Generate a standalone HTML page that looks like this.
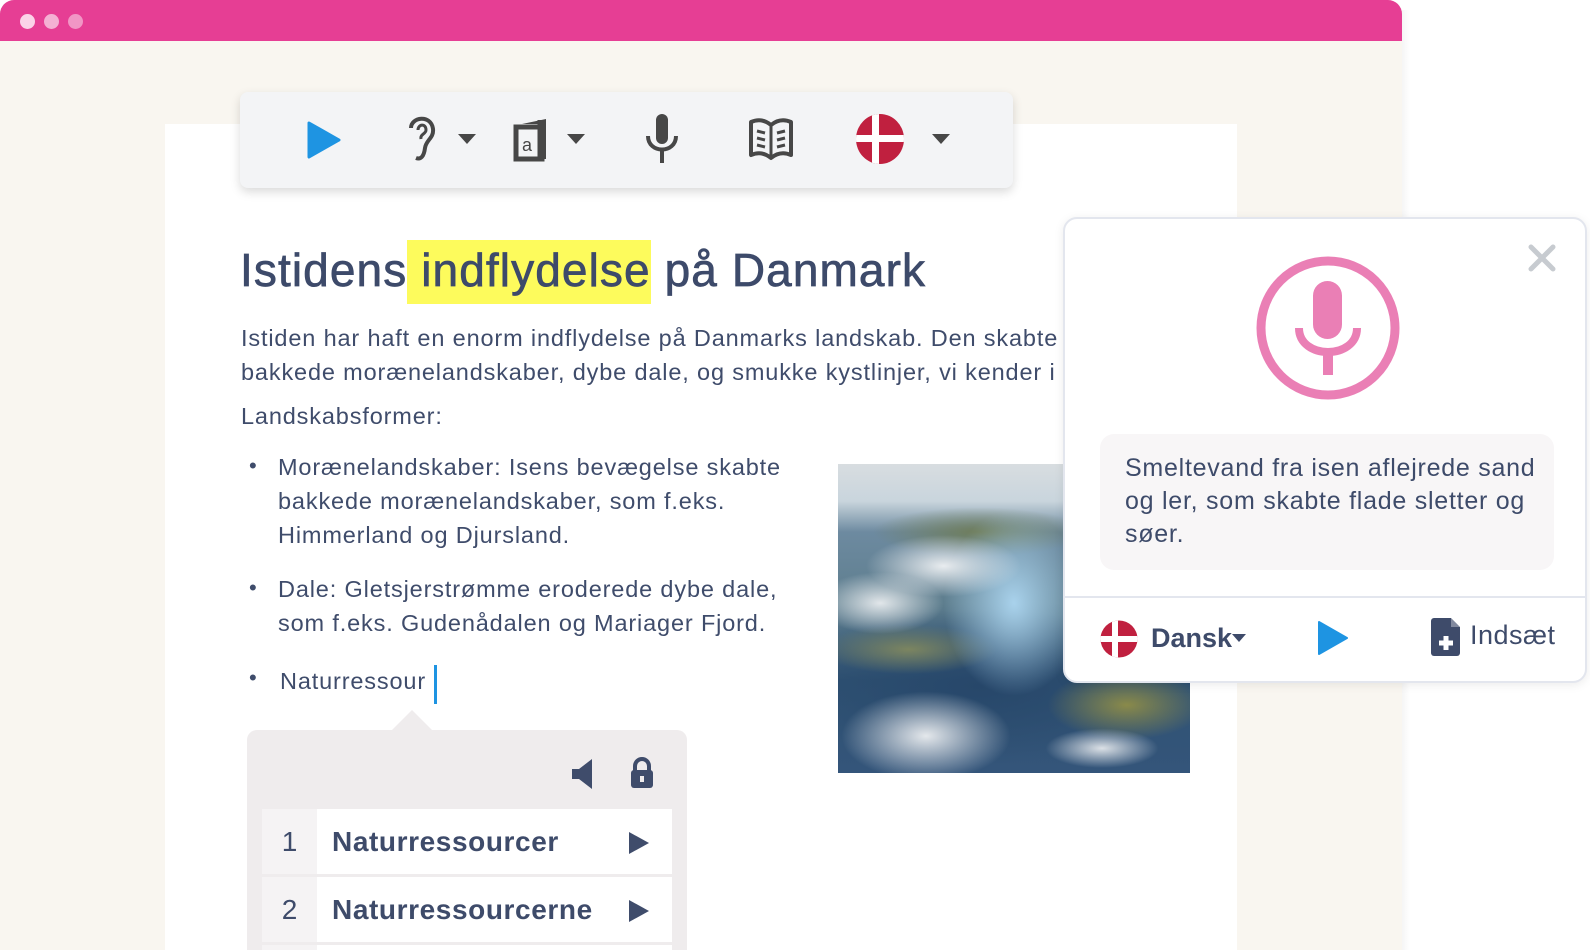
<!DOCTYPE html>
<html><head><meta charset="utf-8"><style>
*{margin:0;padding:0;box-sizing:border-box}
html,body{width:1590px;height:950px;overflow:hidden}
body{background:#fff;font-family:"Liberation Sans",sans-serif;color:#3e4b6a;position:relative}
.win{position:absolute;left:0;top:0;width:1402px;height:950px;background:#f9f6f0;border-radius:14px 14px 0 0;overflow:hidden}
.wsh{position:absolute;left:1402px;top:10px;width:8px;height:940px;background:linear-gradient(90deg,rgba(0,0,0,.04),transparent)}
.bar{height:41px;background:#e63e94}
.dot{position:absolute;top:14px;width:15px;height:15px;border-radius:50%}
.doc{position:absolute;left:165px;top:124px;width:1072px;height:826px;background:#fff}
.tb{position:absolute;left:240px;top:92px;width:773px;height:96px;background:#f3f4f6;border-radius:8px;box-shadow:0 4px 10px rgba(0,0,0,.15)}
.tb svg{position:absolute}
h1{position:absolute;left:240px;top:243px;font-size:46px;font-weight:normal;color:#3d4a6a;white-space:nowrap;letter-spacing:1.1px;-webkit-text-stroke:.7px #3d4a6a}
.hl{background:#fdfb5c;padding:4px 0 8px}
.p{position:absolute;left:241px;font-size:23.5px;line-height:34px;white-space:nowrap;color:#3f4c6b;letter-spacing:.85px}
.b{position:absolute;left:249px;font-size:22px;color:#3f4c6b}
.img{position:absolute;left:838px;top:464px;width:352px;height:309px;overflow:hidden;background:
radial-gradient(ellipse 22% 10% at 30% 33%,rgba(240,242,244,.95),transparent),
radial-gradient(ellipse 18% 10% at 12% 45%,rgba(240,242,244,.9),transparent),
radial-gradient(ellipse 30% 18% at 25% 88%,rgba(238,240,242,.95),transparent 80%),
radial-gradient(ellipse 20% 8% at 75% 92%,rgba(238,240,242,.9),transparent 80%),
radial-gradient(ellipse 28% 14% at 82% 78%,#8a8a4a,transparent 80%),
radial-gradient(ellipse 20% 30% at 50% 45%,#a9d2ec,transparent),
radial-gradient(ellipse 30% 8% at 40% 22%,#6f7d5a,transparent),
radial-gradient(ellipse 25% 8% at 20% 60%,#7c8560,transparent),
radial-gradient(ellipse 60% 25% at 40% 72%,#27476a,transparent),
linear-gradient(#d8dde0 0,#c9d5dd 12%,#6d8aa0 22%,#5e7e8e 45%,#2f5273 70%,#34557a 100%)}
.pop{position:absolute;left:1063px;top:217px;width:524px;height:466px;background:#fff;border:2px solid #e3e6ee;border-radius:14px;box-shadow:0 2px 10px rgba(0,0,0,.08)}
.sg{position:absolute;left:247px;top:730px;width:440px;height:220px;background:#efeced;border-radius:10px 10px 0 0}
.rows{position:absolute;left:0;top:0;width:440px;height:220px;overflow:hidden}
.row{position:absolute;left:15px;width:410px;height:65px;background:#fff}
.row .n{position:absolute;left:0;top:0;width:55px;height:65px;background:#f5f3f4;font-size:28px;text-align:center;line-height:65px}
.row .w{position:absolute;left:70px;top:0;line-height:65px;font-size:28px;font-weight:bold;letter-spacing:.6px}
</style></head><body>
<div class="win"><div class="bar"></div>
<div class="dot" style="left:20px;background:#fbd3e8"></div>
<div class="dot" style="left:44px;background:#f4b0d3"></div>
<div class="dot" style="left:68px;background:#f196c5"></div>
<div class="doc"></div></div>
<div class="wsh"></div>

<div class="tb">
<svg style="left:66px;top:28px" width="36" height="40" viewBox="0 0 36 40"><path d="M3 3 L33 20 L3 37Z" fill="#1e94e2" stroke="#1e94e2" stroke-width="3" stroke-linejoin="round"/></svg>
<svg style="left:164px;top:22px" width="40" height="50" viewBox="0 0 40 50"><path d="M7 14 C7 3 27 0 29 15 C30 24 22 26 21 34 C20 42 17 46 12 44" fill="none" stroke="#474747" stroke-width="4"/><path d="M14 16 C14 10 22 9 22 16 C22 20 16 20 17 25" fill="none" stroke="#474747" stroke-width="3"/></svg>
<svg style="left:218px;top:42px" width="18" height="10"><path d="M0 0H18L9 10Z" fill="#474747"/></svg>
<svg style="left:270px;top:22px" width="42" height="50" viewBox="0 0 42 50"><path d="M12 10 L36 5 V45 H30 V10" fill="#474747"/><path d="M30 6 V45" stroke="#474747" stroke-width="5"/><rect x="6" y="13" width="26" height="32" fill="none" stroke="#474747" stroke-width="5"/><text x="12" y="37" font-size="18" font-family="Liberation Sans" fill="#474747">a</text></svg>
<svg style="left:327px;top:42px" width="18" height="10"><path d="M0 0H18L9 10Z" fill="#474747"/></svg>
<svg style="left:404px;top:20px" width="36" height="54" viewBox="0 0 36 54"><rect x="12" y="2" width="12" height="30" rx="6" fill="#474747"/><path d="M4 24 C4 42 32 42 32 24" fill="none" stroke="#474747" stroke-width="4"/><rect x="16" y="37" width="4" height="14" fill="#474747"/></svg>
<svg style="left:508px;top:25px" width="46" height="44" viewBox="0 0 46 44"><path d="M3 5 C10 2 17 3 23 8 C29 3 36 2 43 5 V38 C36 35 29 36 23 41 C17 36 10 35 3 38Z" fill="none" stroke="#474747" stroke-width="4" stroke-linejoin="round"/><path d="M23 8V41" stroke="#474747" stroke-width="3"/><path d="M9 14L17 16M9 21L17 23M9 28L17 30M29 16L37 14M29 23L37 21M29 30L37 28" stroke="#474747" stroke-width="3"/></svg>
<svg style="left:616px;top:22px" width="48" height="50" viewBox="0 0 48 50"><clipPath id="c1"><ellipse cx="24" cy="25" rx="24" ry="25"/></clipPath><g clip-path="url(#c1)"><rect width="48" height="50" fill="#c0203f"/><rect x="16" width="7" height="50" fill="#fff"/><rect y="21" width="48" height="7" fill="#fff"/></g></svg>
<svg style="left:692px;top:42px" width="18" height="10"><path d="M0 0H18L9 10Z" fill="#474747"/></svg>
</div>

<h1>Istidens<span class="hl"> indflydelse</span> på Danmark</h1>
<div class="p" style="top:321px">Istiden har haft en enorm indflydelse på Danmarks landskab. Den skabte<br>bakkede morænelandskaber, dybe dale, og smukke kystlinjer, vi kender i</div>
<div class="p" style="top:399px">Landskabsformer:</div>
<div class="b" style="top:453px">•</div>
<div class="p" style="left:278px;top:450px">Morænelandskaber: Isens bevægelse skabte<br>bakkede morænelandskaber, som f.eks.<br>Himmerland og Djursland.</div>
<div class="b" style="top:575px">•</div>
<div class="p" style="left:278px;top:572px">Dale: Gletsjerstrømme eroderede dybe dale,<br>som f.eks. Gudenådalen og Mariager Fjord.</div>
<div class="b" style="top:665px">•</div>
<div class="p" style="left:280px;top:664px">Naturressour</div>
<div style="position:absolute;left:434px;top:665px;width:3px;height:39px;background:#1e94e2"></div>

<div class="img"></div>

<div class="sg">
<div style="position:absolute;left:143px;top:-20px;width:0;height:0;border-left:22px solid transparent;border-right:22px solid transparent;border-bottom:22px solid #efeced"></div>
<svg style="position:absolute;left:323px;top:28px" width="26" height="32" viewBox="0 0 26 32"><path d="M2 11H9L22 1V31L9 21H2Z" fill="#3f4c6b"/></svg>
<svg style="position:absolute;left:383px;top:27px" width="24" height="32" viewBox="0 0 24 32"><path d="M5 14V9A7 7 0 0 1 19 9V14" fill="none" stroke="#3f4c6b" stroke-width="4"/><rect x="1" y="13" width="22" height="18" rx="3" fill="#3f4c6b"/><rect x="10" y="19" width="4" height="6" fill="#efeced"/></svg>
<div class="rows">
<div class="row" style="top:79px"><div class="n">1</div><div class="w">Naturressourcer</div><svg style="position:absolute;left:367px;top:23px" width="20" height="22"><path d="M0 0L20 11L0 22Z" fill="#3f4c6b"/></svg></div>
<div class="row" style="top:147px"><div class="n">2</div><div class="w">Naturressourcerne</div><svg style="position:absolute;left:367px;top:23px" width="20" height="22"><path d="M0 0L20 11L0 22Z" fill="#3f4c6b"/></svg></div>
<div class="row" style="top:215px"><div class="n"></div></div>
</div>
</div>

<div class="pop">
<svg style="position:absolute;left:463px;top:25px" width="28" height="28" viewBox="0 0 28 28"><path d="M3 3L25 25M25 3L3 25" stroke="#c7cbd0" stroke-width="5" stroke-linecap="round"/></svg>
<svg style="position:absolute;left:190px;top:36px" width="146" height="146" viewBox="0 0 146 146"><circle cx="73" cy="73" r="67" fill="none" stroke="#ea7fb5" stroke-width="9"/><rect x="58" y="26" width="29" height="58" rx="14.5" fill="#ea7fb5"/><path d="M44 73C44 105 102 105 102 73" fill="none" stroke="#ea7fb5" stroke-width="8"/><rect x="68" y="96" width="10" height="24" fill="#ea7fb5"/></svg>
<div style="position:absolute;left:35px;top:215px;width:454px;height:136px;background:#f8f6f7;border-radius:14px;padding:18px 0 0 25px;font-size:25px;line-height:33px;color:#3e4b6a;letter-spacing:.75px;white-space:nowrap">Smeltevand fra isen aflejrede sand<br>og ler, som skabte flade sletter og<br>søer.</div>
<div style="position:absolute;left:0;top:377px;width:520px;height:2px;background:#e3e6ee"></div>
<svg style="position:absolute;left:35px;top:400px" width="38" height="40" viewBox="0 0 38 40"><clipPath id="c2"><circle cx="19" cy="20" r="18.5"/></clipPath><g clip-path="url(#c2)"><rect width="38" height="40" fill="#c0203f"/><rect x="12" width="6" height="40" fill="#fff"/><rect y="17" width="38" height="6" fill="#fff"/></g></svg>
<div style="position:absolute;left:86px;top:404px;font-size:27px;font-weight:bold;color:#3e4b6a">Dansk</div>
<svg style="position:absolute;left:167px;top:415px" width="14" height="8"><path d="M0 0H14L7 8Z" fill="#3e4b6a"/></svg>
<svg style="position:absolute;left:252px;top:401px" width="32" height="36" viewBox="0 0 32 36"><path d="M2 2L30 18L2 34Z" fill="#1e94e2" stroke="#1e94e2" stroke-width="2" stroke-linejoin="round"/></svg>
<svg style="position:absolute;left:366px;top:398px" width="30" height="40" viewBox="0 0 30 40"><path d="M3 1H20L29 10V36A3 3 0 0 1 26 39H3A3 3 0 0 1 0 36V4A3 3 0 0 1 3 1Z" fill="#3e4b6a"/><path d="M20 1V10H29" fill="#fff" opacity=".35"/><path d="M8 26H22M15 19V33" stroke="#fff" stroke-width="5"/></svg>
<div style="position:absolute;left:405px;top:401px;font-size:27px;color:#3e4b6a;letter-spacing:.5px">Indsæt</div>
</div>
</body></html>
